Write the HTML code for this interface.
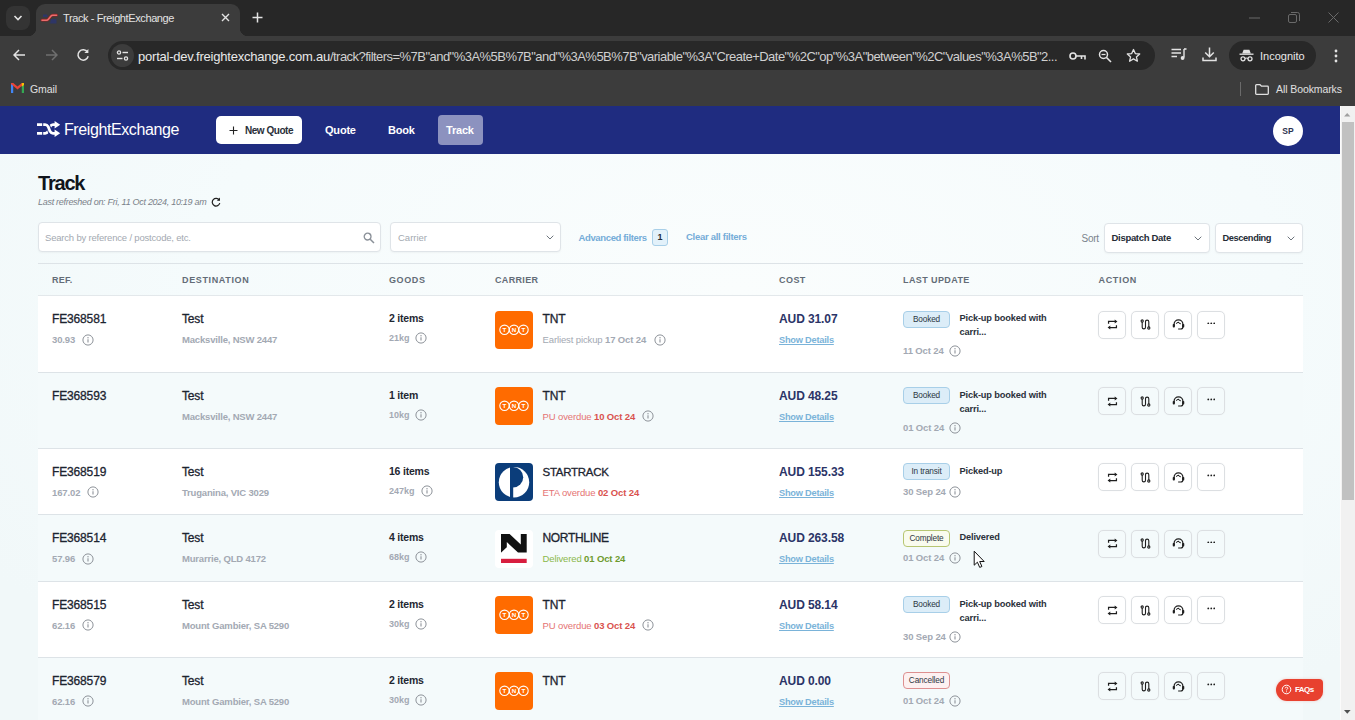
<!DOCTYPE html>
<html><head><meta charset="utf-8"><title>Track - FreightExchange</title>
<style>
*{box-sizing:border-box;margin:0;padding:0}
html,body{width:1355px;height:720px;overflow:hidden;background:#f4fafc;font-family:"Liberation Sans",sans-serif;color:#1c2430}
.abs{position:absolute}
#chrome{position:absolute;left:0;top:0;width:1355px;height:106px;background:#3c3c3c}
#tabstrip{position:absolute;left:0;top:0;width:1355px;height:36px;background:#272727}
#tab{position:absolute;left:36px;top:4px;width:204px;height:32px;background:#3c3c3c;border-radius:9px 9px 0 0}
#tab:before,#tab:after{content:"";position:absolute;bottom:0;width:8px;height:8px;background:radial-gradient(circle at 0 0,#272727 8px,#3c3c3c 8.5px)}
#tab:before{left:-8px}
#tab:after{right:-8px;background:radial-gradient(circle at 100% 0,#272727 8px,#3c3c3c 8.5px)}
#tabsearch{position:absolute;left:6px;top:6px;width:24px;height:24px;border-radius:8px;background:#343434}
.ct{color:#e3e3e3;white-space:nowrap;position:absolute}
#urlbar{position:absolute;left:108px;top:41px;width:1047px;height:29px;border-radius:15px;background:#282828}
#site{position:absolute;left:3px;top:3px;width:23px;height:23px;border-radius:12px;background:#3c3c3c}
#incog{position:absolute;left:1229px;top:41px;width:87px;height:29px;border-radius:15px;background:#282828}
#page{position:absolute;left:0;top:106px;width:1340px;height:614px;background:#f4fafc;overflow:hidden}
#sbar{position:absolute;left:1340px;top:106px;width:15px;height:614px;background:#f1f1f1;border-left:1px solid #fbfbfb}
#thumb{position:absolute;left:1px;top:16px;width:12px;height:378px;background:#c1c1c1}
#nav{position:absolute;left:0;top:0;width:1340px;height:47.5px;background:#1f2c80}
.navl{position:absolute;color:#fff;font-weight:bold;font-size:11px;letter-spacing:-0.2px;white-space:nowrap}

#page{background:radial-gradient(ellipse 900px 500px at 55% 30%,#fafdfd 0%,#f5fbfc 60%,#f1f8f9 100%)}
#content{position:absolute;left:0;top:-106px;width:1340px;height:720px}
#content div,#content span{white-space:nowrap}
.inp{position:absolute;background:#fff;border:1px solid #dfe4e8;border-radius:4px;box-shadow:0 1px 2px rgba(0,0,0,.04)}
.ph{position:absolute;color:#a3a9b1;font-size:9.5px}
.lnk{position:absolute;color:#74acd8;font-weight:bold;font-size:9.5px}
.th{position:absolute;top:275px;font-size:9px;font-weight:bold;letter-spacing:.9px;color:#636c77}
.hl{position:absolute;left:38px;width:1265px;height:1px;background:#dde3e7}
.row{position:absolute;left:38px;width:1265px;border-bottom:1px solid #dde3e7;overflow:hidden}
.row.w{background:#fff}
.row.t{background:#f4fafb}
.row>div,.row>svg{position:absolute}
.p{font-size:12px;letter-spacing:-.15px;color:#1c2430;-webkit-text-stroke:.3px #1c2430;top:16px;line-height:14px}
.s{font-size:9.5px;font-weight:bold;color:#a3a9b3;line-height:12px;letter-spacing:-.12px}
.s.kg{font-size:9px;letter-spacing:0}
.p.g{top:15.2px;font-size:10.5px;font-weight:bold;letter-spacing:-.22px;-webkit-text-stroke:0;color:#1f2732}
.s.city{letter-spacing:-.18px}
.cost{font-size:12px;letter-spacing:-.1px;font-weight:bold;color:#2b3467;top:16px;line-height:14px;left:741px}
.sd{font-size:9.25px;letter-spacing:-.23px;font-weight:bold;color:#7ab3d9;text-decoration:underline;left:741px;top:38px;line-height:12px}
.bdg{left:865px;top:14.5px;width:47px;height:17px;border-radius:4px;font-size:8.25px;letter-spacing:-.15px;text-align:center;line-height:15px;color:#2d3743;border:1px solid #a8cfe8;background:#dcedf8}
.msg{left:921.5px;letter-spacing:-.15px;font-size:9.25px;font-weight:bold;color:#2b313b;line-height:14px;top:15px}
.btn{top:14.5px;width:28px;height:28px;border:1px solid #dcdfe2;border-radius:5px;background:transparent;box-shadow:0 0 1px rgba(0,0,0,.08)}
.logo{left:457px;top:14.5px;width:38px;height:38px;border-radius:4px}
.tnt{background:#ff6b00}

.ic{width:12px;height:12px}
.btn svg{position:absolute}

.s .n{font-weight:normal}
.s.cr{color:#d9534f}
.s.cr .n{color:#e57373}
.s.cgr{color:#6e9a2e}
.s.cgr .n{color:#8bb84a}
.bdg.cp{background:#f9fbee;border-color:#b7c672}
.bdg.cn{background:#fdf1f1;border-color:#dd9090}
.st{background:#0b3d7a}
.nl{background:#fff}
</style></head><body>
<div id="chrome">
 <div id="tabstrip">
  <div id="tabsearch"><svg class="abs" style="left:7px;top:8px" width="10" height="8" viewBox="0 0 10 8"><path d="M1.5 2 L5 5.5 L8.5 2" fill="none" stroke="#e3e3e3" stroke-width="1.6"/></svg></div>
  <div id="tab">
   <svg class="abs" style="left:4px;top:6px" width="20" height="16" viewBox="0 0 20 16"><path d="M3 4.5 H7 L8 7 H3 Z M11 9 H16.5 V13.5 H10 Z" fill="#2a3476" opacity=".75"/><path d="M2 10.2 H6.5 Q7.6 10.2 8.4 9.2 L10.8 6.2 Q11.6 5.2 12.8 5.2 H16.6" fill="none" stroke="#8a2323" stroke-width="2.8" stroke-linecap="round"/><path d="M2 10.2 H6.5 Q7.6 10.2 8.4 9.2 L10.8 6.2 Q11.6 5.2 12.8 5.2 H16.6" fill="none" stroke="#ea6d6d" stroke-width="1.5" stroke-linecap="round"/></svg>
   <div class="ct" style="left:27px;top:8px;font-size:11px;letter-spacing:-0.39px">Track - FreightExchange</div>
   <svg class="abs" style="left:185px;top:9px" width="9" height="9" viewBox="0 0 9 9"><path d="M1 1 L8 8 M8 1 L1 8" stroke="#e3e3e3" stroke-width="1.4"/></svg>
  </div>
  <svg class="abs" style="left:252px;top:12px" width="11" height="11" viewBox="0 0 11 11"><path d="M5.5 0.5 V10.5 M0.5 5.5 H10.5" stroke="#e3e3e3" stroke-width="1.5"/></svg>
  <svg class="abs" style="left:1249px;top:17px" width="11" height="2" viewBox="0 0 11 2"><path d="M0 1 H11" stroke="#6a6a6a" stroke-width="1"/></svg>
  <svg class="abs" style="left:1288px;top:12px" width="12" height="12" viewBox="0 0 12 12"><rect x="0.5" y="2.5" width="8" height="8" rx="1.5" fill="none" stroke="#6a6a6a"/><path d="M3 0.5 H9.5 Q11.5 0.5 11.5 2.5 V9" fill="none" stroke="#6a6a6a"/></svg>
  <svg class="abs" style="left:1328px;top:12px" width="11" height="11" viewBox="0 0 11 11"><path d="M0.5 0.5 L10.5 10.5 M10.5 0.5 L0.5 10.5" stroke="#6a6a6a" stroke-width="1"/></svg>
 </div>
 <!-- toolbar -->
 <svg class="abs" style="left:13px;top:49px" width="13" height="12" viewBox="0 0 13 12"><path d="M12 6 H1.5 M6 1 L1 6 L6 11" fill="none" stroke="#e3e3e3" stroke-width="1.5"/></svg>
 <svg class="abs" style="left:45px;top:49px" width="13" height="12" viewBox="0 0 13 12"><path d="M1 6 H11.5 M7 1 L12 6 L7 11" fill="none" stroke="#6f6f6f" stroke-width="1.5"/></svg>
 <svg class="abs" style="left:76px;top:48px" width="14" height="14" viewBox="0 0 14 14"><path d="M11.5 4 A5.2 5.2 0 1 0 12.2 8.3" fill="none" stroke="#e3e3e3" stroke-width="1.5"/><path d="M12.4 1 V5 H8.4 Z" fill="#e3e3e3"/></svg>
 <div id="urlbar">
  <div id="site"><svg class="abs" style="left:5px;top:6px" width="13" height="11" viewBox="0 0 13 11"><circle cx="3" cy="2.5" r="1.6" fill="none" stroke="#e3e3e3" stroke-width="1.3"/><path d="M6.5 2.5 H12" stroke="#e3e3e3" stroke-width="1.4"/><circle cx="10" cy="8.5" r="1.6" fill="none" stroke="#e3e3e3" stroke-width="1.3"/><path d="M1 8.5 H6.5" stroke="#e3e3e3" stroke-width="1.4"/></svg></div>
  <div class="ct" id="url" style="left:30px;top:8px;font-size:13px;letter-spacing:-0.22px;color:#e9e9e9">portal-dev.freightexchange.com.au<span style="color:#d0d0d0;letter-spacing:-0.535px">/track?filters=%7B"and"%3A%5B%7B"and"%3A%5B%7B"variable"%3A"Create+Date"%2C"op"%3A"between"%2C"values"%3A%5B"2...</span></div>
  <!-- key -->
  <svg class="abs" style="left:961px;top:10px" width="17" height="10" viewBox="0 0 17 10"><circle cx="4" cy="5" r="3" fill="none" stroke="#e3e3e3" stroke-width="1.6"/><path d="M7 5 H16 V8.5 M12.5 5 V8" fill="none" stroke="#e3e3e3" stroke-width="1.6"/></svg>
  <!-- zoom -->
  <svg class="abs" style="left:990px;top:8px" width="14" height="14" viewBox="0 0 14 14"><circle cx="5.5" cy="5.5" r="4" fill="none" stroke="#e3e3e3" stroke-width="1.5"/><path d="M8.5 8.5 L13 13" stroke="#e3e3e3" stroke-width="1.6"/><path d="M3.5 5.5 H7.5" stroke="#e3e3e3" stroke-width="1.2"/></svg>
  <!-- star -->
  <svg class="abs" style="left:1018px;top:7px" width="15" height="15" viewBox="0 0 15 15"><path d="M7.5 1.5 L9.3 5.6 L13.7 6 L10.4 8.9 L11.4 13.2 L7.5 10.9 L3.6 13.2 L4.6 8.9 L1.3 6 L5.7 5.6 Z" fill="none" stroke="#e3e3e3" stroke-width="1.3" stroke-linejoin="round"/></svg>
 </div>
 <!-- media -->
 <svg class="abs" style="left:1171px;top:48px" width="16" height="13" viewBox="0 0 16 13"><path d="M0.5 1.5 H10 M0.5 5 H10 M0.5 8.5 H6" stroke="#e3e3e3" stroke-width="1.5"/><path d="M13 1 V9.5" stroke="#e3e3e3" stroke-width="1.4"/><path d="M13 1 H15.5" stroke="#e3e3e3" stroke-width="1.6"/><circle cx="11.6" cy="10" r="1.9" fill="#e3e3e3"/></svg>
 <!-- download -->
 <svg class="abs" style="left:1202px;top:47px" width="15" height="15" viewBox="0 0 15 15"><path d="M7.5 0.5 V9.5 M3.2 5.5 L7.5 9.8 L11.8 5.5" fill="none" stroke="#e3e3e3" stroke-width="1.5"/><path d="M1 10.5 V13.5 H14 V10.5" fill="none" stroke="#e3e3e3" stroke-width="1.5"/></svg>
 <div id="incog">
  <svg class="abs" style="left:10px;top:8px" width="15" height="13" viewBox="0 0 15 13"><path d="M3.2 4.5 L4.6 0.8 H10.4 L11.8 4.5 Z" fill="#e3e3e3"/><path d="M0.5 5.2 H14.5" stroke="#e3e3e3" stroke-width="1.3"/><circle cx="4" cy="9.8" r="2" fill="none" stroke="#e3e3e3" stroke-width="1.3"/><circle cx="11" cy="9.8" r="2" fill="none" stroke="#e3e3e3" stroke-width="1.3"/><path d="M6 9.5 Q7.5 8.5 9 9.5" fill="none" stroke="#e3e3e3" stroke-width="1.1"/></svg>
  <div class="ct" style="left:31px;top:8.6px;font-size:11px;color:#e9e9e9">Incognito</div>
 </div>
 <svg class="abs" style="left:1333.5px;top:48.5px" width="4" height="14" viewBox="0 0 4 14"><circle cx="2" cy="2" r="1.4" fill="#e3e3e3"/><circle cx="2" cy="7" r="1.4" fill="#e3e3e3"/><circle cx="2" cy="12" r="1.4" fill="#e3e3e3"/></svg>
 <!-- bookmarks -->
 <svg class="abs" style="left:11px;top:83px" width="13" height="10" viewBox="0 0 13 10"><path d="M0 0 H2.2 V10 H0 Z" fill="#4285f4"/><path d="M10.8 0 H13 V10 H10.8 Z" fill="#34a853"/><path d="M0 0 L2.2 0 L6.5 3.6 L10.8 0 L13 0 L13 1 L6.5 6.4 L0 1 Z" fill="#ea4335"/><path d="M10.8 0 H13 V2 L10.8 3.8 Z" fill="#fbbc04"/></svg>
 <div class="ct" style="left:30px;top:82.6px;font-size:10.5px;letter-spacing:-0.08px;color:#e0e0e0">Gmail</div>
 <div class="abs" style="left:1240px;top:82px;width:1px;height:14px;background:#6b6b6b"></div>
 <svg class="abs" style="left:1254.5px;top:83.5px" width="14" height="11" viewBox="0 0 14 11"><path d="M0.7 1.5 Q0.7 0.7 1.5 0.7 H5 L6.5 2.2 H12.5 Q13.3 2.2 13.3 3 V9.5 Q13.3 10.3 12.5 10.3 H1.5 Q0.7 10.3 0.7 9.5 Z" fill="none" stroke="#e0e0e0" stroke-width="1.3"/></svg>
 <div class="ct" style="left:1276px;top:82.6px;font-size:10.5px;letter-spacing:-0.09px;color:#e0e0e0">All Bookmarks</div>
</div>

<div id="sbar">
 <svg class="abs" style="left:3.3px;top:7px" width="6.4" height="3.6" viewBox="0 0 7 4"><path d="M0 4 L3.5 0 L7 4 Z" fill="#a0a0a0"/></svg>
 <div id="thumb"></div>
 <svg class="abs" style="left:3px;top:604px" width="6.6" height="3.8" viewBox="0 0 7 4"><path d="M0 0 L3.5 4 L7 0 Z" fill="#505050"/></svg>
</div>

<div id="page">
 <div id="nav">
  <svg class="abs" style="left:37px;top:15px" width="24" height="16" viewBox="0 0 24 16"><path d="M0 2.3 H5.2 V5.1 H0 Z M0 10.9 H5.2 V13.7 H0 Z" fill="#fff"/><g fill="none" stroke="#fff" stroke-width="2.7"><path d="M6.2 12.3 H8.2 Q10 12.3 11.2 10.3 L13 5.7 Q14.2 3.7 16 3.7 H18.5"/><path d="M6.2 3.7 H8.2 Q10 3.7 11.2 5.7 L13 10.3 Q14.2 12.3 16 12.3 H18.5" stroke="#1f2c80" stroke-width="4.6"/><path d="M6.2 3.7 H8.2 Q10 3.7 11.2 5.7 L13 10.3 Q14.2 12.3 16 12.3 H18.5"/></g><path d="M17.6 0 L23.2 3.7 L17.6 7.4 Z M17.6 8.6 L23.2 12.3 L17.6 16 Z" fill="#fff"/></svg>
  <div class="abs" id="brand" style="left:64px;top:14.5px;color:#fff;font-size:16px;letter-spacing:-0.4px;white-space:nowrap">FreightExchange</div>
  <div class="abs" style="left:216px;top:10px;width:86px;height:28px;border-radius:5px;background:#fff"></div>
  <svg class="abs" style="left:229px;top:19.5px" width="9" height="9" viewBox="0 0 9 9"><path d="M4.5 0.5 V8.5 M0.5 4.5 H8.5" stroke="#222" stroke-width="1.1"/></svg>
  <div class="abs" id="nq" style="left:245px;top:18.7px;font-size:10px;font-weight:bold;color:#2a2f3a;white-space:nowrap;letter-spacing:-0.47px">New Quote</div>
  <div class="navl" id="nquote" style="left:325px;top:17.7px">Quote</div>
  <div class="navl" id="nbook" style="left:388px;top:17.7px">Book</div>
  <div class="abs" style="left:438px;top:9px;width:45px;height:30px;border-radius:4px;background:#8c92bf"></div>
  <div class="navl" id="ntrack" style="left:446px;top:17.7px">Track</div>
  <div class="abs" style="left:1273px;top:9.5px;width:30px;height:30px;border-radius:15px;background:#fff"></div>
  <div class="abs" id="sp" style="left:1273px;top:19.6px;width:30px;text-align:center;font-size:8.5px;font-weight:bold;color:#2d3450">SP</div>
 </div>
 <div id="content">
  <div class="abs" id="ttl" style="left:38px;top:172px;font-size:20px;font-weight:bold;color:#10151c;letter-spacing:-1.2px">Track</div>
  <div class="abs" id="lr" style="left:38px;top:197px;font-size:9px;font-style:italic;letter-spacing:-0.29px;color:#7a8189">Last refreshed on: Fri, 11 Oct 2024, 10:19 am</div>
  <svg class="abs" style="left:211px;top:197px" width="10" height="10" viewBox="0 0 10 10"><path d="M8.3 3.2 A3.8 3.8 0 1 0 8.8 6" fill="none" stroke="#222" stroke-width="1.2"/><path d="M9 0.6 V3.8 H5.8 Z" fill="#222"/></svg>
  <div class="inp" style="left:38px;top:222px;width:343px;height:30px"></div>
  <div class="ph" id="ph1" style="left:45px;top:232px;letter-spacing:-0.19px">Search by reference / postcode, etc.</div>
  <svg class="abs" style="left:363px;top:232px" width="12" height="12" viewBox="0 0 12 12"><circle cx="4.6" cy="4.6" r="3.4" fill="none" stroke="#8a9098" stroke-width="1.3"/><path d="M7.2 7.2 L11 11" stroke="#8a9098" stroke-width="1.5"/></svg>
  <div class="inp" style="left:390px;top:222px;width:171px;height:30px"></div>
  <div class="ph" id="ph2" style="left:398px;top:232px">Carrier</div>
  <svg class="abs" style="left:546px;top:235px" width="8" height="5" viewBox="0 0 8 5"><path d="M0.7 0.7 L4 4 L7.3 0.7" fill="none" stroke="#6e757d" stroke-width="1"/></svg>
  <div class="lnk" id="af" style="left:578.5px;top:232px;letter-spacing:-0.36px">Advanced filters</div>
  <div class="abs" style="left:652px;top:229px;width:16px;height:17px;border-radius:3px;border:1px solid #a8cfe8;background:#e2f1fa;font-size:9px;font-weight:bold;text-align:center;line-height:15px;color:#252c36">1</div>
  <div class="lnk" id="cf" style="left:686px;top:231px;letter-spacing:-0.28px">Clear all filters</div>
  <div class="abs" id="sort" style="left:1081.5px;top:233px;letter-spacing:-0.25px;font-size:10px;color:#7b838c">Sort</div>
  <div class="inp" style="left:1104px;top:223px;width:106px;height:30px"></div>
  <div class="abs" id="dd" style="left:1111.5px;top:232.4px;letter-spacing:-0.3px;font-size:9.5px;font-weight:bold;color:#252c36">Dispatch Date</div>
  <svg class="abs" style="left:1194px;top:236px" width="8" height="5" viewBox="0 0 8 5"><path d="M0.7 0.7 L4 4 L7.3 0.7" fill="none" stroke="#6e757d" stroke-width="1"/></svg>
  <div class="inp" style="left:1215px;top:223px;width:88px;height:30px"></div>
  <div class="abs" id="ds" style="left:1222.5px;top:233.2px;letter-spacing:-0.38px;font-size:9.25px;font-weight:bold;color:#252c36">Descending</div>
  <svg class="abs" style="left:1287px;top:236px" width="8" height="5" viewBox="0 0 8 5"><path d="M0.7 0.7 L4 4 L7.3 0.7" fill="none" stroke="#6e757d" stroke-width="1"/></svg>
  <div class="hl" style="top:263px"></div>
  <div class="th" id="h1" style="left:52px;letter-spacing:.25px">REF.</div>
  <div class="th" id="h2" style="left:182px;letter-spacing:.64px">DESTINATION</div>
  <div class="th" id="h3" style="left:389px;letter-spacing:.62px">GOODS</div>
  <div class="th" id="h4" style="left:495px;letter-spacing:.34px">CARRIER</div>
  <div class="th" id="h5" style="left:779px;letter-spacing:.45px">COST</div>
  <div class="th" id="h6" style="left:903px;letter-spacing:.4px">LAST UPDATE</div>
  <div class="th" id="h7" style="left:1098.5px;letter-spacing:.67px">ACTION</div>
  <div class="hl" style="top:295px;height:2px;background:#e3e8eb"></div>
  <div class="row w" style="top:296px;height:76.5px">
   <div class="p" style="left:14px">FE368581</div>
   <div class="s" style="left:14px;top:38px">30.93</div><svg class="ic" style="left:43.5px;top:37.5px" viewBox="0 0 12 12"><circle cx="6" cy="6" r="5.1" fill="none" stroke="#8d9299" stroke-width="1"/><path d="M6 5.2 V8.6" stroke="#8d9299" stroke-width="1.1"/><circle cx="6" cy="3.7" r=".7" fill="#8d9299"/></svg>
   <div class="p" style="left:144px">Test</div>
   <div class="s city" style="left:144px;top:38px">Macksville, NSW 2447</div>
   <div class="p g" style="left:351px">2 items</div>
   <div class="s kg" style="left:351px;top:36px">21kg</div><svg class="ic" style="left:377px;top:36px" viewBox="0 0 12 12"><circle cx="6" cy="6" r="5.1" fill="none" stroke="#8d9299" stroke-width="1"/><path d="M6 5.2 V8.6" stroke="#8d9299" stroke-width="1.1"/><circle cx="6" cy="3.7" r=".7" fill="#8d9299"/></svg>
   <div class="logo tnt"><svg width="38" height="38" viewBox="0 0 38 38"><g fill="none" stroke="#fff" stroke-width="1.1"><circle cx="9.5" cy="18.8" r="4.7"/><circle cx="19" cy="18.8" r="4.7"/><circle cx="28.5" cy="18.8" r="4.7"/></g><g fill="#fff" font-family="Liberation Sans" font-size="6.2" font-weight="bold" text-anchor="middle"><text x="9.5" y="21">T</text><text x="19" y="21">N</text><text x="28.5" y="21">T</text></g></svg></div>
   <div class="p" style="left:504.5px">TNT</div>
   <div class="s cg" style="left:504.5px;top:38px"><span class="n">Earliest pickup</span> 17 Oct 24</div><svg class="ic" style="left:616px;top:37.5px" viewBox="0 0 12 12"><circle cx="6" cy="6" r="5.1" fill="none" stroke="#8d9299" stroke-width="1"/><path d="M6 5.2 V8.6" stroke="#8d9299" stroke-width="1.1"/><circle cx="6" cy="3.7" r=".7" fill="#8d9299"/></svg>
   <div class="cost">AUD 31.07</div><div class="sd">Show Details</div>
   <div class="bdg bk">Booked</div>
   <div class="msg">Pick-up booked with<br>carri...</div>
   <div class="s" style="left:865px;top:49px">11 Oct 24</div><svg class="ic" style="left:910.5px;top:49px" viewBox="0 0 12 12"><circle cx="6" cy="6" r="5.1" fill="none" stroke="#8d9299" stroke-width="1"/><path d="M6 5.2 V8.6" stroke="#8d9299" stroke-width="1.1"/><circle cx="6" cy="3.7" r=".7" fill="#8d9299"/></svg>
   <div class="btn" style="left:1060px"><svg style="left:7.5px;top:7.5px" width="11" height="11" viewBox="0 0 12 12"><g fill="none" stroke="#1f1f1f" stroke-width="1.35"><path d="M1.7 5.2 V2.7 H9"/><path d="M10.3 6.8 V9.3 H3"/></g><path d="M8.4 .5 L11.4 2.7 L8.4 4.9 Z M3.6 7.1 L.6 9.3 L3.6 11.5 Z" fill="#1f1f1f"/></svg></div><div class="btn" style="left:1093px"><svg style="left:7.5px;top:7.5px" width="11" height="11" viewBox="0 0 12 12"><g fill="none" stroke="#1f1f1f" stroke-width="1.2"><circle cx="2.4" cy="2.2" r="1.2"/><circle cx="9.6" cy="9.8" r="1.2"/><path d="M2.4 3.4 V9 Q2.4 10.8 4.2 10.8 Q6 10.8 6 9 V3 Q6 1.2 7.8 1.2 Q9.6 1.2 9.6 3 V8.6"/></g></svg></div><div class="btn" style="left:1126px"><svg style="left:6.5px;top:7.5px" width="13" height="11" viewBox="0 0 14 12"><g fill="none" stroke="#1f1f1f" stroke-width="1.3"><path d="M2.2 7.6 V5.8 A4.8 4.8 0 0 1 11.8 5.8 V8.4 Q11.8 10.9 9.4 10.9 H6.6"/><path d="M4.6 5.3 Q5.6 3.6 7 3.6 Q8.2 5.4 9.6 5.2" stroke-width="1.1"/></g><rect x=".7" y="5.4" width="2.4" height="3.8" rx="1" fill="#1f1f1f"/><rect x="10.9" y="5.4" width="2.4" height="3.8" rx="1" fill="#1f1f1f"/></svg></div><div class="btn" style="left:1159px"><svg style="left:8.5px;top:10px" width="8.5" height="2.8" viewBox="0 0 10 3"><circle cx="1.5" cy="1.5" r="1.05" fill="#1f1f1f"/><circle cx="5" cy="1.5" r="1.05" fill="#1f1f1f"/><circle cx="8.5" cy="1.5" r="1.05" fill="#1f1f1f"/></svg></div>
   </div>
  <div class="row t" style="top:372.5px;height:76px">
   <div class="p" style="left:14px">FE368593</div>
   <div class="p" style="left:144px">Test</div>
   <div class="s city" style="left:144px;top:38px">Macksville, NSW 2447</div>
   <div class="p g" style="left:351px">1 item</div>
   <div class="s kg" style="left:351px;top:36px">10kg</div><svg class="ic" style="left:377px;top:36px" viewBox="0 0 12 12"><circle cx="6" cy="6" r="5.1" fill="none" stroke="#8d9299" stroke-width="1"/><path d="M6 5.2 V8.6" stroke="#8d9299" stroke-width="1.1"/><circle cx="6" cy="3.7" r=".7" fill="#8d9299"/></svg>
   <div class="logo tnt"><svg width="38" height="38" viewBox="0 0 38 38"><g fill="none" stroke="#fff" stroke-width="1.1"><circle cx="9.5" cy="18.8" r="4.7"/><circle cx="19" cy="18.8" r="4.7"/><circle cx="28.5" cy="18.8" r="4.7"/></g><g fill="#fff" font-family="Liberation Sans" font-size="6.2" font-weight="bold" text-anchor="middle"><text x="9.5" y="21">T</text><text x="19" y="21">N</text><text x="28.5" y="21">T</text></g></svg></div>
   <div class="p" style="left:504.5px">TNT</div>
   <div class="s cr" style="left:504.5px;top:38px"><span class="n">PU overdue</span> 10 Oct 24</div><svg class="ic" style="left:603.5px;top:37.5px" viewBox="0 0 12 12"><circle cx="6" cy="6" r="5.1" fill="none" stroke="#8d9299" stroke-width="1"/><path d="M6 5.2 V8.6" stroke="#8d9299" stroke-width="1.1"/><circle cx="6" cy="3.7" r=".7" fill="#8d9299"/></svg>
   <div class="cost">AUD 48.25</div><div class="sd">Show Details</div>
   <div class="bdg bk">Booked</div>
   <div class="msg">Pick-up booked with<br>carri...</div>
   <div class="s" style="left:865px;top:49px">01 Oct 24</div><svg class="ic" style="left:910.5px;top:49px" viewBox="0 0 12 12"><circle cx="6" cy="6" r="5.1" fill="none" stroke="#8d9299" stroke-width="1"/><path d="M6 5.2 V8.6" stroke="#8d9299" stroke-width="1.1"/><circle cx="6" cy="3.7" r=".7" fill="#8d9299"/></svg>
   <div class="btn" style="left:1060px"><svg style="left:7.5px;top:7.5px" width="11" height="11" viewBox="0 0 12 12"><g fill="none" stroke="#1f1f1f" stroke-width="1.35"><path d="M1.7 5.2 V2.7 H9"/><path d="M10.3 6.8 V9.3 H3"/></g><path d="M8.4 .5 L11.4 2.7 L8.4 4.9 Z M3.6 7.1 L.6 9.3 L3.6 11.5 Z" fill="#1f1f1f"/></svg></div><div class="btn" style="left:1093px"><svg style="left:7.5px;top:7.5px" width="11" height="11" viewBox="0 0 12 12"><g fill="none" stroke="#1f1f1f" stroke-width="1.2"><circle cx="2.4" cy="2.2" r="1.2"/><circle cx="9.6" cy="9.8" r="1.2"/><path d="M2.4 3.4 V9 Q2.4 10.8 4.2 10.8 Q6 10.8 6 9 V3 Q6 1.2 7.8 1.2 Q9.6 1.2 9.6 3 V8.6"/></g></svg></div><div class="btn" style="left:1126px"><svg style="left:6.5px;top:7.5px" width="13" height="11" viewBox="0 0 14 12"><g fill="none" stroke="#1f1f1f" stroke-width="1.3"><path d="M2.2 7.6 V5.8 A4.8 4.8 0 0 1 11.8 5.8 V8.4 Q11.8 10.9 9.4 10.9 H6.6"/><path d="M4.6 5.3 Q5.6 3.6 7 3.6 Q8.2 5.4 9.6 5.2" stroke-width="1.1"/></g><rect x=".7" y="5.4" width="2.4" height="3.8" rx="1" fill="#1f1f1f"/><rect x="10.9" y="5.4" width="2.4" height="3.8" rx="1" fill="#1f1f1f"/></svg></div><div class="btn" style="left:1159px"><svg style="left:8.5px;top:10px" width="8.5" height="2.8" viewBox="0 0 10 3"><circle cx="1.5" cy="1.5" r="1.05" fill="#1f1f1f"/><circle cx="5" cy="1.5" r="1.05" fill="#1f1f1f"/><circle cx="8.5" cy="1.5" r="1.05" fill="#1f1f1f"/></svg></div>
   </div>
  <div class="row w" style="top:448.5px;height:66.5px">
   <div class="p" style="left:14px">FE368519</div>
   <div class="s" style="left:14px;top:38px">167.02</div><svg class="ic" style="left:49px;top:37.5px" viewBox="0 0 12 12"><circle cx="6" cy="6" r="5.1" fill="none" stroke="#8d9299" stroke-width="1"/><path d="M6 5.2 V8.6" stroke="#8d9299" stroke-width="1.1"/><circle cx="6" cy="3.7" r=".7" fill="#8d9299"/></svg>
   <div class="p" style="left:144px">Test</div>
   <div class="s city" style="left:144px;top:38px">Truganina, VIC 3029</div>
   <div class="p g" style="left:351px">16 items</div>
   <div class="s kg" style="left:351px;top:36px">247kg</div><svg class="ic" style="left:382.5px;top:36px" viewBox="0 0 12 12"><circle cx="6" cy="6" r="5.1" fill="none" stroke="#8d9299" stroke-width="1"/><path d="M6 5.2 V8.6" stroke="#8d9299" stroke-width="1.1"/><circle cx="6" cy="3.7" r=".7" fill="#8d9299"/></svg>
   <div class="logo st"><svg width="38" height="38" viewBox="0 0 38 38"><circle cx="19" cy="19.2" r="15.2" fill="#fff"/><path d="M15 3.5 H18.2 V35 H15 Z" fill="#0b3d7a"/><path d="M18 4 A10.2 10.2 0 0 1 18 24.4 Z" fill="#0b3d7a"/></svg></div>
   <div class="p" style="left:504.5px;font-size:11.5px;letter-spacing:-.27px">STARTRACK</div>
   <div class="s cr" style="left:504.5px;top:38px"><span class="n">ETA overdue</span> 02 Oct 24</div>
   <div class="cost">AUD 155.33</div><div class="sd">Show Details</div>
   <div class="bdg bk">In transit</div>
   <div class="msg">Picked-up</div>
   <div class="s" style="left:865px;top:37px">30 Sep 24</div><svg class="ic" style="left:910.5px;top:37px" viewBox="0 0 12 12"><circle cx="6" cy="6" r="5.1" fill="none" stroke="#8d9299" stroke-width="1"/><path d="M6 5.2 V8.6" stroke="#8d9299" stroke-width="1.1"/><circle cx="6" cy="3.7" r=".7" fill="#8d9299"/></svg>
   <div class="btn" style="left:1060px"><svg style="left:7.5px;top:7.5px" width="11" height="11" viewBox="0 0 12 12"><g fill="none" stroke="#1f1f1f" stroke-width="1.35"><path d="M1.7 5.2 V2.7 H9"/><path d="M10.3 6.8 V9.3 H3"/></g><path d="M8.4 .5 L11.4 2.7 L8.4 4.9 Z M3.6 7.1 L.6 9.3 L3.6 11.5 Z" fill="#1f1f1f"/></svg></div><div class="btn" style="left:1093px"><svg style="left:7.5px;top:7.5px" width="11" height="11" viewBox="0 0 12 12"><g fill="none" stroke="#1f1f1f" stroke-width="1.2"><circle cx="2.4" cy="2.2" r="1.2"/><circle cx="9.6" cy="9.8" r="1.2"/><path d="M2.4 3.4 V9 Q2.4 10.8 4.2 10.8 Q6 10.8 6 9 V3 Q6 1.2 7.8 1.2 Q9.6 1.2 9.6 3 V8.6"/></g></svg></div><div class="btn" style="left:1126px"><svg style="left:6.5px;top:7.5px" width="13" height="11" viewBox="0 0 14 12"><g fill="none" stroke="#1f1f1f" stroke-width="1.3"><path d="M2.2 7.6 V5.8 A4.8 4.8 0 0 1 11.8 5.8 V8.4 Q11.8 10.9 9.4 10.9 H6.6"/><path d="M4.6 5.3 Q5.6 3.6 7 3.6 Q8.2 5.4 9.6 5.2" stroke-width="1.1"/></g><rect x=".7" y="5.4" width="2.4" height="3.8" rx="1" fill="#1f1f1f"/><rect x="10.9" y="5.4" width="2.4" height="3.8" rx="1" fill="#1f1f1f"/></svg></div><div class="btn" style="left:1159px"><svg style="left:8.5px;top:10px" width="8.5" height="2.8" viewBox="0 0 10 3"><circle cx="1.5" cy="1.5" r="1.05" fill="#1f1f1f"/><circle cx="5" cy="1.5" r="1.05" fill="#1f1f1f"/><circle cx="8.5" cy="1.5" r="1.05" fill="#1f1f1f"/></svg></div>
   </div>
  <div class="row t" style="top:515px;height:66.5px">
   <div class="p" style="left:14px">FE368514</div>
   <div class="s" style="left:14px;top:38px">57.96</div><svg class="ic" style="left:43.5px;top:37.5px" viewBox="0 0 12 12"><circle cx="6" cy="6" r="5.1" fill="none" stroke="#8d9299" stroke-width="1"/><path d="M6 5.2 V8.6" stroke="#8d9299" stroke-width="1.1"/><circle cx="6" cy="3.7" r=".7" fill="#8d9299"/></svg>
   <div class="p" style="left:144px">Test</div>
   <div class="s city" style="left:144px;top:38px">Murarrie, QLD 4172</div>
   <div class="p g" style="left:351px">4 items</div>
   <div class="s kg" style="left:351px;top:36px">68kg</div><svg class="ic" style="left:377px;top:36px" viewBox="0 0 12 12"><circle cx="6" cy="6" r="5.1" fill="none" stroke="#8d9299" stroke-width="1"/><path d="M6 5.2 V8.6" stroke="#8d9299" stroke-width="1.1"/><circle cx="6" cy="3.7" r=".7" fill="#8d9299"/></svg>
   <div class="logo nl"><svg width="38" height="38" viewBox="0 0 38 38"><path d="M6 22.6 V4 H14.6 L25.8 14.6 V4 H31.7 V22.6 H23 L11.8 12 V17.2 L6.2 22.6 Z" fill="#111"/><rect x="6" y="28.8" width="25.7" height="4.2" fill="#d81e3f"/></svg></div>
   <div class="p" style="left:504.5px;letter-spacing:-.32px">NORTHLINE</div>
   <div class="s cgr" style="left:504.5px;top:38px"><span class="n">Delivered</span> 01 Oct 24</div>
   <div class="cost">AUD 263.58</div><div class="sd">Show Details</div>
   <div class="bdg cp">Complete</div>
   <div class="msg">Delivered</div>
   <div class="s" style="left:865px;top:37px">01 Oct 24</div><svg class="ic" style="left:910.5px;top:37px" viewBox="0 0 12 12"><circle cx="6" cy="6" r="5.1" fill="none" stroke="#8d9299" stroke-width="1"/><path d="M6 5.2 V8.6" stroke="#8d9299" stroke-width="1.1"/><circle cx="6" cy="3.7" r=".7" fill="#8d9299"/></svg>
   <div class="btn" style="left:1060px"><svg style="left:7.5px;top:7.5px" width="11" height="11" viewBox="0 0 12 12"><g fill="none" stroke="#1f1f1f" stroke-width="1.35"><path d="M1.7 5.2 V2.7 H9"/><path d="M10.3 6.8 V9.3 H3"/></g><path d="M8.4 .5 L11.4 2.7 L8.4 4.9 Z M3.6 7.1 L.6 9.3 L3.6 11.5 Z" fill="#1f1f1f"/></svg></div><div class="btn" style="left:1093px"><svg style="left:7.5px;top:7.5px" width="11" height="11" viewBox="0 0 12 12"><g fill="none" stroke="#1f1f1f" stroke-width="1.2"><circle cx="2.4" cy="2.2" r="1.2"/><circle cx="9.6" cy="9.8" r="1.2"/><path d="M2.4 3.4 V9 Q2.4 10.8 4.2 10.8 Q6 10.8 6 9 V3 Q6 1.2 7.8 1.2 Q9.6 1.2 9.6 3 V8.6"/></g></svg></div><div class="btn" style="left:1126px"><svg style="left:6.5px;top:7.5px" width="13" height="11" viewBox="0 0 14 12"><g fill="none" stroke="#1f1f1f" stroke-width="1.3"><path d="M2.2 7.6 V5.8 A4.8 4.8 0 0 1 11.8 5.8 V8.4 Q11.8 10.9 9.4 10.9 H6.6"/><path d="M4.6 5.3 Q5.6 3.6 7 3.6 Q8.2 5.4 9.6 5.2" stroke-width="1.1"/></g><rect x=".7" y="5.4" width="2.4" height="3.8" rx="1" fill="#1f1f1f"/><rect x="10.9" y="5.4" width="2.4" height="3.8" rx="1" fill="#1f1f1f"/></svg></div><div class="btn" style="left:1159px"><svg style="left:8.5px;top:10px" width="8.5" height="2.8" viewBox="0 0 10 3"><circle cx="1.5" cy="1.5" r="1.05" fill="#1f1f1f"/><circle cx="5" cy="1.5" r="1.05" fill="#1f1f1f"/><circle cx="8.5" cy="1.5" r="1.05" fill="#1f1f1f"/></svg></div>
   </div>
  <div class="row w" style="top:581.5px;height:76px">
   <div class="p" style="left:14px">FE368515</div>
   <div class="s" style="left:14px;top:38px">62.16</div><svg class="ic" style="left:43.5px;top:37.5px" viewBox="0 0 12 12"><circle cx="6" cy="6" r="5.1" fill="none" stroke="#8d9299" stroke-width="1"/><path d="M6 5.2 V8.6" stroke="#8d9299" stroke-width="1.1"/><circle cx="6" cy="3.7" r=".7" fill="#8d9299"/></svg>
   <div class="p" style="left:144px">Test</div>
   <div class="s city" style="left:144px;top:38px">Mount Gambier, SA 5290</div>
   <div class="p g" style="left:351px">2 items</div>
   <div class="s kg" style="left:351px;top:36px">30kg</div><svg class="ic" style="left:377px;top:36px" viewBox="0 0 12 12"><circle cx="6" cy="6" r="5.1" fill="none" stroke="#8d9299" stroke-width="1"/><path d="M6 5.2 V8.6" stroke="#8d9299" stroke-width="1.1"/><circle cx="6" cy="3.7" r=".7" fill="#8d9299"/></svg>
   <div class="logo tnt"><svg width="38" height="38" viewBox="0 0 38 38"><g fill="none" stroke="#fff" stroke-width="1.1"><circle cx="9.5" cy="18.8" r="4.7"/><circle cx="19" cy="18.8" r="4.7"/><circle cx="28.5" cy="18.8" r="4.7"/></g><g fill="#fff" font-family="Liberation Sans" font-size="6.2" font-weight="bold" text-anchor="middle"><text x="9.5" y="21">T</text><text x="19" y="21">N</text><text x="28.5" y="21">T</text></g></svg></div>
   <div class="p" style="left:504.5px">TNT</div>
   <div class="s cr" style="left:504.5px;top:38px"><span class="n">PU overdue</span> 03 Oct 24</div><svg class="ic" style="left:603.5px;top:37.5px" viewBox="0 0 12 12"><circle cx="6" cy="6" r="5.1" fill="none" stroke="#8d9299" stroke-width="1"/><path d="M6 5.2 V8.6" stroke="#8d9299" stroke-width="1.1"/><circle cx="6" cy="3.7" r=".7" fill="#8d9299"/></svg>
   <div class="cost">AUD 58.14</div><div class="sd">Show Details</div>
   <div class="bdg bk">Booked</div>
   <div class="msg">Pick-up booked with<br>carri...</div>
   <div class="s" style="left:865px;top:49px">30 Sep 24</div><svg class="ic" style="left:910.5px;top:49px" viewBox="0 0 12 12"><circle cx="6" cy="6" r="5.1" fill="none" stroke="#8d9299" stroke-width="1"/><path d="M6 5.2 V8.6" stroke="#8d9299" stroke-width="1.1"/><circle cx="6" cy="3.7" r=".7" fill="#8d9299"/></svg>
   <div class="btn" style="left:1060px"><svg style="left:7.5px;top:7.5px" width="11" height="11" viewBox="0 0 12 12"><g fill="none" stroke="#1f1f1f" stroke-width="1.35"><path d="M1.7 5.2 V2.7 H9"/><path d="M10.3 6.8 V9.3 H3"/></g><path d="M8.4 .5 L11.4 2.7 L8.4 4.9 Z M3.6 7.1 L.6 9.3 L3.6 11.5 Z" fill="#1f1f1f"/></svg></div><div class="btn" style="left:1093px"><svg style="left:7.5px;top:7.5px" width="11" height="11" viewBox="0 0 12 12"><g fill="none" stroke="#1f1f1f" stroke-width="1.2"><circle cx="2.4" cy="2.2" r="1.2"/><circle cx="9.6" cy="9.8" r="1.2"/><path d="M2.4 3.4 V9 Q2.4 10.8 4.2 10.8 Q6 10.8 6 9 V3 Q6 1.2 7.8 1.2 Q9.6 1.2 9.6 3 V8.6"/></g></svg></div><div class="btn" style="left:1126px"><svg style="left:6.5px;top:7.5px" width="13" height="11" viewBox="0 0 14 12"><g fill="none" stroke="#1f1f1f" stroke-width="1.3"><path d="M2.2 7.6 V5.8 A4.8 4.8 0 0 1 11.8 5.8 V8.4 Q11.8 10.9 9.4 10.9 H6.6"/><path d="M4.6 5.3 Q5.6 3.6 7 3.6 Q8.2 5.4 9.6 5.2" stroke-width="1.1"/></g><rect x=".7" y="5.4" width="2.4" height="3.8" rx="1" fill="#1f1f1f"/><rect x="10.9" y="5.4" width="2.4" height="3.8" rx="1" fill="#1f1f1f"/></svg></div><div class="btn" style="left:1159px"><svg style="left:8.5px;top:10px" width="8.5" height="2.8" viewBox="0 0 10 3"><circle cx="1.5" cy="1.5" r="1.05" fill="#1f1f1f"/><circle cx="5" cy="1.5" r="1.05" fill="#1f1f1f"/><circle cx="8.5" cy="1.5" r="1.05" fill="#1f1f1f"/></svg></div>
   </div>
  <div class="row t" style="top:657.5px;height:70px">
   <div class="p" style="left:14px">FE368579</div>
   <div class="s" style="left:14px;top:38px">62.16</div><svg class="ic" style="left:43.5px;top:37.5px" viewBox="0 0 12 12"><circle cx="6" cy="6" r="5.1" fill="none" stroke="#8d9299" stroke-width="1"/><path d="M6 5.2 V8.6" stroke="#8d9299" stroke-width="1.1"/><circle cx="6" cy="3.7" r=".7" fill="#8d9299"/></svg>
   <div class="p" style="left:144px">Test</div>
   <div class="s city" style="left:144px;top:38px">Mount Gambier, SA 5290</div>
   <div class="p g" style="left:351px">2 items</div>
   <div class="s kg" style="left:351px;top:36px">30kg</div><svg class="ic" style="left:377px;top:36px" viewBox="0 0 12 12"><circle cx="6" cy="6" r="5.1" fill="none" stroke="#8d9299" stroke-width="1"/><path d="M6 5.2 V8.6" stroke="#8d9299" stroke-width="1.1"/><circle cx="6" cy="3.7" r=".7" fill="#8d9299"/></svg>
   <div class="logo tnt"><svg width="38" height="38" viewBox="0 0 38 38"><g fill="none" stroke="#fff" stroke-width="1.1"><circle cx="9.5" cy="18.8" r="4.7"/><circle cx="19" cy="18.8" r="4.7"/><circle cx="28.5" cy="18.8" r="4.7"/></g><g fill="#fff" font-family="Liberation Sans" font-size="6.2" font-weight="bold" text-anchor="middle"><text x="9.5" y="21">T</text><text x="19" y="21">N</text><text x="28.5" y="21">T</text></g></svg></div>
   <div class="p" style="left:504.5px">TNT</div>
   <div class="cost">AUD 0.00</div><div class="sd">Show Details</div>
   <div class="bdg cn">Cancelled</div>
   <div class="s" style="left:865px;top:37px">01 Oct 24</div><svg class="ic" style="left:910.5px;top:37px" viewBox="0 0 12 12"><circle cx="6" cy="6" r="5.1" fill="none" stroke="#8d9299" stroke-width="1"/><path d="M6 5.2 V8.6" stroke="#8d9299" stroke-width="1.1"/><circle cx="6" cy="3.7" r=".7" fill="#8d9299"/></svg>
   <div class="btn" style="left:1060px"><svg style="left:7.5px;top:7.5px" width="11" height="11" viewBox="0 0 12 12"><g fill="none" stroke="#1f1f1f" stroke-width="1.35"><path d="M1.7 5.2 V2.7 H9"/><path d="M10.3 6.8 V9.3 H3"/></g><path d="M8.4 .5 L11.4 2.7 L8.4 4.9 Z M3.6 7.1 L.6 9.3 L3.6 11.5 Z" fill="#1f1f1f"/></svg></div><div class="btn" style="left:1093px"><svg style="left:7.5px;top:7.5px" width="11" height="11" viewBox="0 0 12 12"><g fill="none" stroke="#1f1f1f" stroke-width="1.2"><circle cx="2.4" cy="2.2" r="1.2"/><circle cx="9.6" cy="9.8" r="1.2"/><path d="M2.4 3.4 V9 Q2.4 10.8 4.2 10.8 Q6 10.8 6 9 V3 Q6 1.2 7.8 1.2 Q9.6 1.2 9.6 3 V8.6"/></g></svg></div><div class="btn" style="left:1126px"><svg style="left:6.5px;top:7.5px" width="13" height="11" viewBox="0 0 14 12"><g fill="none" stroke="#1f1f1f" stroke-width="1.3"><path d="M2.2 7.6 V5.8 A4.8 4.8 0 0 1 11.8 5.8 V8.4 Q11.8 10.9 9.4 10.9 H6.6"/><path d="M4.6 5.3 Q5.6 3.6 7 3.6 Q8.2 5.4 9.6 5.2" stroke-width="1.1"/></g><rect x=".7" y="5.4" width="2.4" height="3.8" rx="1" fill="#1f1f1f"/><rect x="10.9" y="5.4" width="2.4" height="3.8" rx="1" fill="#1f1f1f"/></svg></div><div class="btn" style="left:1159px"><svg style="left:8.5px;top:10px" width="8.5" height="2.8" viewBox="0 0 10 3"><circle cx="1.5" cy="1.5" r="1.05" fill="#1f1f1f"/><circle cx="5" cy="1.5" r="1.05" fill="#1f1f1f"/><circle cx="8.5" cy="1.5" r="1.05" fill="#1f1f1f"/></svg></div>
   </div>
  <!--ROWS-->
  <div class="abs" style="left:1276px;top:679px;width:47px;height:22px;background:#e8412f;border-radius:11px 4px 9px 11px;box-shadow:0 0 3px rgba(232,65,47,.25)"></div>
  <svg class="abs" style="left:1281px;top:684px" width="11" height="11" viewBox="0 0 11 11"><circle cx="5.5" cy="5.5" r="4.3" fill="none" stroke="#fff" stroke-width="1"/><path d="M4.2 4.4 Q4.2 3.2 5.5 3.2 Q6.8 3.2 6.8 4.3 Q6.8 5.1 5.5 5.7 V6.4" fill="none" stroke="#fff" stroke-width=".9"/><circle cx="5.5" cy="7.7" r=".55" fill="#fff"/></svg>
  <div class="abs" id="faq" style="left:1295px;top:684.5px;font-size:8px;font-weight:bold;color:#fff;letter-spacing:-.6px">FAQs</div>
  <svg class="abs" style="left:973px;top:550px" width="13" height="19" viewBox="0 0 13 19"><path d="M1.2 1.2 V15.2 L4.4 12.2 L6.7 17.4 L8.9 16.5 L6.7 11.5 H11.2 Z" fill="#fff" stroke="#111" stroke-width="1" stroke-linejoin="round"/></svg>
 </div>
</div>
</body></html>
